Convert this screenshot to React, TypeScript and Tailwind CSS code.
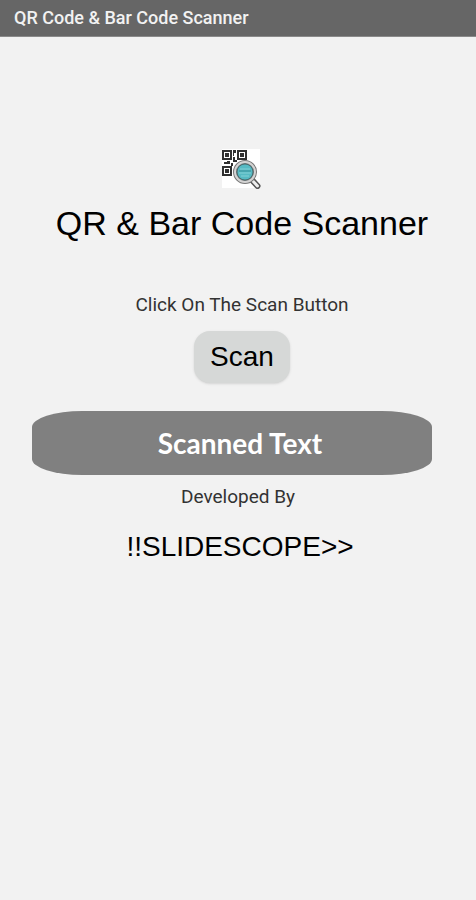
function ScannerLogo() {
  return (
    <svg className="h-10 w-10" viewBox="0 0 40 40" role="img" aria-label="QR code under a magnifying glass">
      <rect width="38" height="39" fill="#fff" />
      <g fill="none" stroke="#303030" strokeWidth="2">
        <rect x="1" y="2" width="8" height="8" />
        <rect x="16" y="2" width="8" height="8" />
        <rect x="1" y="18" width="8" height="8" />
      </g>
      <g fill="#303030">
        <rect x="3" y="4" width="4" height="4" />
        <rect x="18" y="4" width="4" height="4" />
        <rect x="3" y="20" width="4" height="4" />
        <path d="M11 1h3v3h-2v3h-1zM11 8h2v3h2v2h-4zM2 13h3v2H2zM5 12h3v3H5zM9 14h2v3H9z" />
      </g>
      <path d="M29 30l6.500 7" stroke="#555" strokeWidth="6" strokeLinecap="round" />
      <path d="M29 30l6.500 7" stroke="#eee" strokeWidth="3" strokeLinecap="round" />
      <circle cx="23" cy="23" r="10" fill="#5cbcc4" stroke="#777" strokeWidth="4" />
      <circle cx="23" cy="23" r="10" fill="none" stroke="#d4d4d4" strokeWidth="2" />
      <circle cx="23" cy="23" r="8" fill="#56bac3" stroke="#4a6c70" strokeWidth="1" />
      <path d="M18 20h10M17 24h12M19 27h8" stroke="#83d0d6" strokeWidth="1" />
      <path d="M17 22h12" stroke="#368f99" strokeWidth="1" />
    </svg>
  );
}

export default function App() {
  return (
    <div className="min-h-screen bg-[#f2f2f2] font-['Liberation_Sans',Arial,sans-serif] text-black">
      <header className="border-b border-[#8a8a8a] bg-[#666666] px-3.5 py-1.5 font-['Roboto',sans-serif] text-lg leading-6 font-medium text-[#f2f2f2]">
        QR Code &amp; Bar Code Scanner
      </header>
      <main className="flex flex-col items-center pt-28">
        <div className="flex flex-col items-center pl-2">
          <ScannerLogo />
          <h1 className="mt-3.5 text-[34px] leading-10 whitespace-nowrap">QR &amp; Bar Code Scanner</h1>
          <p className="mt-11.5 font-['Roboto',sans-serif] text-[19px] leading-8 text-[#333]">
            Click On The Scan Button
          </p>
          <button
            type="button"
            className="mt-2.5 rounded-2xl bg-[#d6d8d7] px-4 py-2 text-[28px] leading-9 shadow-sm"
          >
            Scan
          </button>
        </div>
        <div className="mt-7 w-full pr-11 pl-8">
          <div className="rounded-[50px/16px] bg-[#808080] py-3 pl-4 text-center font-['Lato',sans-serif] text-[28px] leading-10 font-bold text-white">
            Scanned Text
          </div>
        </div>
        <p className="mt-1.5 font-['Roboto',sans-serif] text-[19px] leading-8 text-[#333]">Developed By</p>
        <p className="mt-3.5 pl-1 text-[28px] leading-10">!!SLIDESCOPE&gt;&gt;</p>
      </main>
    </div>
  );
}
